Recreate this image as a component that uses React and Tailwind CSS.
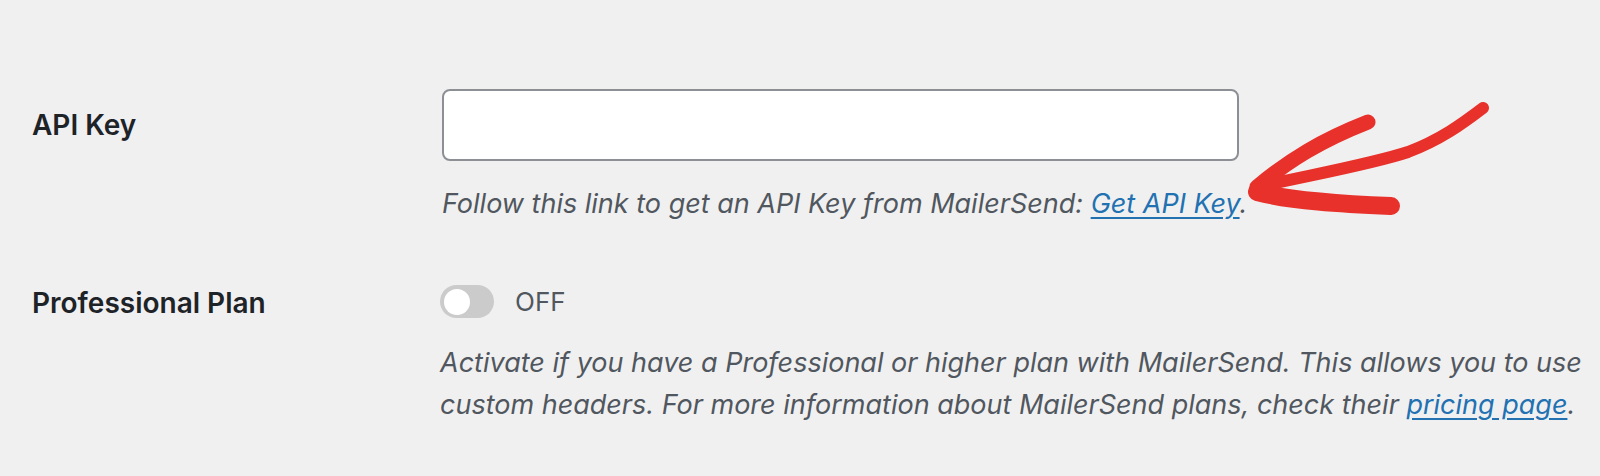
const Toggle = () => (
  <div className="flex items-center gap-[21px]">
    <div className="flex h-[33px] w-[54px] items-center rounded-full bg-[#cbcbcb] pl-[4px]">
      <div className="h-[26px] w-[26px] rounded-full bg-white" />
    </div>
    <span className="text-[26px] leading-none text-[#50575e]">OFF</span>
  </div>
);

const Arrow = () => (
  <svg
    className="pointer-events-none absolute left-0 top-0"
    width="1600"
    height="476"
    viewBox="0 0 1600 476"
    fill="none"
  >
    <g stroke="#e8312a" strokeLinecap="round" strokeLinejoin="round">
      <path d="M1257 187 C1289 160 1322 140 1368 122" strokeWidth="15" />
      <path d="M1257 187 C1315 174 1372 164 1408 152 C1440 140 1462 124 1483 108" strokeWidth="12" />
      <path d="M1257 192 C1292 201 1340 204 1391 206" strokeWidth="18" />
    </g>
  </svg>
);

export default function App() {
  return (
    <div className="relative min-h-[476px] w-full overflow-hidden bg-[#f0f0f1] font-['Inter',sans-serif]">
      <div className="flex flex-col pl-[32px] pt-[89px]">
        {/* API Key */}
        <div className="flex">
          <div className="w-[410px] pt-[20px] text-[28px] font-semibold leading-[32px] text-[#1d2327]">
            API Key
          </div>
          <div className="flex flex-col">
            <input
              type="text"
              className="h-[72px] w-[797px] rounded-[8px] border-2 border-[#8c8f94] bg-white outline-none"
            />
            <p className="mt-[22px] whitespace-nowrap text-[27px] italic leading-[42px] text-[#50575e]">
              Follow this link to get an API Key from MailerSend:{' '}
              <a href="#" className="text-[#2271b1] underline underline-offset-[4px]">
                Get API Key
              </a>
              .
            </p>
          </div>
        </div>

        {/* Professional Plan */}
        <div className="mt-[60px] flex">
          <div className="w-[410px] pt-[2px] text-[28px] font-semibold leading-[32px] text-[#1d2327]">
            Professional Plan
          </div>
          <div className="flex flex-col">
            <Toggle />
            <p className="mt-[24px] w-[1160px] text-[27px] italic leading-[42px] text-[#50575e]">
              Activate if you have a Professional or higher plan with MailerSend. This allows you to use
              custom headers. For more information about MailerSend plans, check their{' '}
              <a href="#" className="text-[#2271b1] underline underline-offset-[4px]">
                pricing page
              </a>
              .
            </p>
          </div>
        </div>
      </div>
      <Arrow />
    </div>
  );
}
